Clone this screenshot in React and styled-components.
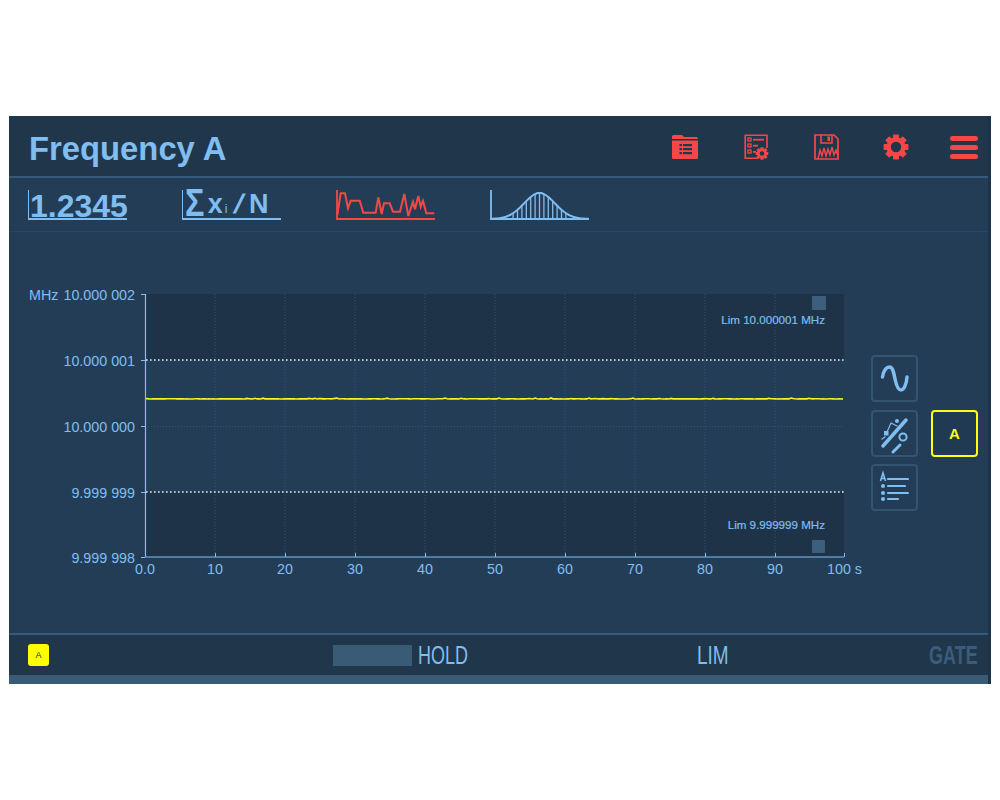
import React from 'react'
import styled, { createGlobalStyle } from 'styled-components'

const BLUE = '#80bdf0'
const RED = '#f44848'

const GlobalStyle = createGlobalStyle`
  html, body {
    margin: 0;
    background: #fff;
    font-family: "Liberation Sans", Arial, sans-serif;
  }
`

const Page = styled.div`
  width: 1000px;
  height: 800px;
  padding: 116px 9px 0;
  box-sizing: border-box;
`

const Panel = styled.div`
  display: flex;
  flex-direction: column;
  width: 982px;
  height: 568px;
  background: #243d57;
  border-right: 3px solid #1d3349;
  box-sizing: border-box;
`

const Header = styled.header`
  display: flex;
  align-items: center;
  justify-content: space-between;
  height: 62px;
  padding: 0 10px 0 20px;
  box-sizing: border-box;
  background: #20364b;
  border-bottom: 2px solid #37597a;
`

const Title = styled.h1`
  margin: 0;
  padding-top: 5px;
  font-size: 32.8px;
  font-weight: 700;
  color: ${BLUE};
`

const Actions = styled.div`
  display: flex;
  align-items: center;
  padding-top: 2px;
`

const ActionIcon = styled.svg`
  display: block;
  width: ${p => p.$w}px;
  height: 28px;
  margin-left: ${p => p.$gap}px;
`

const Tabs = styled.nav`
  display: flex;
  gap: 55px;
  height: 54px;
  padding: 10px 0 0 19px;
  box-sizing: border-box;
  border-bottom: 1px solid #294560;
`

const TextTab = styled.div`
  display: flex;
  align-items: flex-end;
  width: 99px;
  height: 30px;
  margin-top: 2px;
  box-sizing: border-box;
  border-left: 1.5px solid ${BLUE};
  border-bottom: 2px solid ${BLUE};
  color: ${BLUE};
  font-weight: 700;
  line-height: 1;
`

const Reading = styled.span`
  font-size: 32px;
  margin: 0 0 -4px 1px;
`

const MeanFormula = styled.span`
  display: flex;
  align-items: baseline;
  margin: 0 0 -1px 2px;
  font-size: 27px;
  sub {
    font-size: 12px;
    font-weight: 400;
    margin: 0 3px 0 2px;
    vertical-align: baseline;
  }
`

const Sigma = styled.span`
  display: inline-block;
  font-size: 38px;
  transform: translateY(3px) scaleX(0.85);
  transform-origin: left bottom;
`

const Slash = styled.span`
  display: inline-block;
  margin: 0 7px 0 4px;
  transform: skewX(-17deg);
`

const TabIcon = styled.svg`
  display: block;
  width: 99px;
  height: 32px;
`

const Body = styled.main`
  flex: 1;
  display: flex;
  align-items: flex-start;
`

const Chart = styled.svg`
  display: block;
  width: 855px;
  height: 330px;
  margin-top: 48px;
  font-family: "Liberation Sans", Arial, sans-serif;
`

const Side = styled.div`
  display: grid;
  grid-template-columns: 47px 47px;
  grid-auto-rows: 47px;
  column-gap: 13px;
  row-gap: 7.5px;
  margin: 123px 0 0 7px;
`

const SideButton = styled.button`
  grid-column: ${p => (p.$channel ? 2 : 1)};
  grid-row: ${p => p.$row};
  display: flex;
  align-items: center;
  justify-content: center;
  padding: 0;
  box-sizing: border-box;
  background: ${p => (p.$channel ? '#213a54' : 'transparent')};
  border: 2px solid ${p => (p.$channel ? '#ffff14' : '#34546f')};
  border-radius: 4px;
  color: #ffff14;
  font: 700 15px "Liberation Sans", Arial, sans-serif;
`

const SideIcon = styled.svg`
  display: block;
  width: 43px;
  height: 43px;
`

const Footer = styled.footer`
  display: flex;
  align-items: center;
  height: 42px;
  padding: 0 10px 0 19px;
  box-sizing: border-box;
  background: #20364b;
  border-top: 2px solid #37597a;
  color: ${BLUE};
`

const Badge = styled.div`
  display: flex;
  align-items: center;
  justify-content: center;
  width: 21px;
  height: 22px;
  background: #ffff00;
  border-radius: 3px;
  color: #1b2c55;
  font-size: 9px;
`

const HoldBar = styled.div`
  width: 79px;
  height: 21px;
  margin-left: 284px;
  background: #3a5b76;
`

// no condensed family is installed, so the lamp labels are squeezed
const Flag = styled.span`
  display: block;
  width: ${p => p.$w}px;
  margin-left: ${p => p.$left};
  font-size: 25px;
  font-weight: ${p => (p.$off ? 700 : 400)};
  color: ${p => (p.$off ? '#3b5d7c' : BLUE)};
  white-space: nowrap;
  transform: scaleX(${p => p.$squeeze});
  transform-origin: left center;
`

const BottomStrip = styled.div`
  height: 9px;
  background: #3a5b76;
`

function FolderIcon() {
  return (
    <ActionIcon $w={28} $gap={0} viewBox="0 0 28 28">
      <path fill={RED} d="M1 3.5 Q1 2 2.5 2 H11 L13 4 H25.5 Q27 4 27 5.5 V6 H1Z" />
      <path fill={RED} d="M1 7.5 H27 V24.5 Q27 26 25.5 26 H2.5 Q1 26 1 24.5Z" />
      <g fill="#20364b">
        <rect x="8.5" y="11" width="2.4" height="2.2" />
        <rect x="12" y="11" width="9" height="2.2" />
        <rect x="8.5" y="15" width="2.4" height="2.2" />
        <rect x="12" y="15" width="9" height="2.2" />
        <rect x="8.5" y="19" width="2.4" height="2.2" />
        <rect x="12" y="19" width="9" height="2.2" />
      </g>
    </ActionIcon>
  )
}

function GearShape({ cx, cy, r, hole, fill }) {
  const teeth = [0, 45, 90, 135, 180, 225, 270, 315]
  return (
    <g>
      <circle cx={cx} cy={cy} r={r * 0.78} fill={fill} />
      {teeth.map(a => (
        <rect
          key={a}
          x={cx - r * 0.24}
          y={cy - r}
          width={r * 0.48}
          height={r * 0.5}
          rx={r * 0.06}
          fill={fill}
          transform={`rotate(${a} ${cx} ${cy})`}
        />
      ))}
      <circle cx={cx} cy={cy} r={hole} fill="#20364b" />
    </g>
  )
}

function ChecklistIcon() {
  return (
    <ActionIcon $w={25} $gap={45} viewBox="0 0 25 28">
      <path fill="none" stroke={RED} strokeWidth="1.6" d="M14 25.2 H1.2 V2.2 H23 V15" />
      <g fill="none" stroke={RED} strokeWidth="1.3">
        <rect x="4" y="5" width="3" height="3" />
        <rect x="4" y="11" width="3" height="3" />
        <rect x="4" y="17" width="3" height="3" />
      </g>
      <rect x="9" y="5.8" width="11" height="1.8" fill={RED} />
      <rect x="9" y="11.8" width="5" height="1.8" fill={RED} />
      <rect x="9" y="18" width="3" height="1.8" fill={RED} />
      <GearShape cx={18} cy={20.5} r={6.3} hole={2.3} fill={RED} />
    </ActionIcon>
  )
}

function FloppyIcon() {
  return (
    <ActionIcon $w={25} $gap={45} viewBox="0 0 25 28">
      <path fill="none" stroke={RED} strokeWidth="1.7" d="M1 2 H20 L24 6 V26 H1Z" />
      <path fill="none" stroke={RED} strokeWidth="1.6" d="M7 2 V10 H18 V2" />
      <rect x="13.5" y="3.5" width="2.5" height="4.5" fill={RED} />
      <path
        fill="none"
        stroke={RED}
        strokeWidth="1.4"
        d="M4 26 L6 17 L8 23 L10 15 L12 23 L14 16 L16 22 L18 14 L20 22 L22 17 L24 23"
      />
    </ActionIcon>
  )
}

function SettingsIcon() {
  return (
    <ActionIcon $w={26} $gap={44} viewBox="0 0 26 28">
      <GearShape cx={13} cy={14} r={12.4} hole={5.2} fill={RED} />
    </ActionIcon>
  )
}

function HamburgerIcon() {
  return (
    <ActionIcon $w={28} $gap={41} viewBox="0 0 28 28">
      <rect y="3" width="28" height="5" rx="2.5" fill={RED} />
      <rect y="12" width="28" height="5" rx="2.5" fill={RED} />
      <rect y="21" width="28" height="5" rx="2.5" fill={RED} />
    </ActionIcon>
  )
}

function TraceTab() {
  return (
    <TabIcon viewBox="0 0 99 32">
      <path fill="none" stroke={RED} strokeWidth="1.8" d="M1 2 V31 H99" />
      <path
        fill="none"
        stroke={RED}
        strokeWidth="2"
        d="M1.3 27 L4.7 5.3 H9 L12 20.3 L14.7 12.7 H23.7 L27.3 24.7 H39.7 L42.3 9.3 L45.7 26 L48 15.3 H53.7 L57 23.7 H64 L68.3 6 L72.3 28 L77 13.7 L79 21.3 L82.3 8 L84.7 18.7 L87 12.7 L90.3 25.3 H98.3"
      />
    </TabIcon>
  )
}

function bellPoint(x) {
  return 31 - 26 * Math.exp(-Math.pow((x - 49.5) / 21.6, 2))
}

function HistogramTab() {
  const xs = []
  for (let x = 0; x <= 99; x += 1) xs.push(x)
  const curve = xs.map(x => `${x === 0 ? 'M' : 'L'}${x} ${bellPoint(x).toFixed(1)}`).join(' ')
  const bars = [-6, -5, -4, -3, -2, -1, 0, 1, 2, 3, 4, 5, 6].map(k => 49.5 + k * 4.4)
  return (
    <TabIcon viewBox="0 0 99 32">
      <path fill="none" stroke={BLUE} strokeWidth="1.8" d="M1 2 V31 H99" />
      {bars.map(x => (
        <line key={x} x1={x} x2={x} y1={31} y2={bellPoint(x)} stroke={BLUE} strokeWidth="1.3" />
      ))}
      <path fill="none" stroke={BLUE} strokeWidth="2" d={curve} />
    </TabIcon>
  )
}

// repeatable jitter for the measured trace
function tracePath() {
  let d = 'M146 399'
  for (let x = 147; x <= 844; x += 2) {
    const n = Math.sin(x * 12.9898) * 43758.5453
    const j = n - Math.floor(n)
    d += ` L${x} ${(399 - (j > 0.88 ? (j - 0.88) * 9 : j * 0.3)).toFixed(2)}`
  }
  return d
}

const yLabels = [
  ['10.000 002', 294],
  ['10.000 001', 360],
  ['10.000 000', 426],
  ['9.999 999', 492],
  ['9.999 998', 557],
]

const xLabels = ['0.0', '10', '20', '30', '40', '50', '60', '70', '80', '90']
const gridX = [215, 285, 355, 425, 495, 565, 635, 705, 775]

function FrequencyChart() {
  return (
    <Chart viewBox="9 280 855 330">
      <rect x="145" y="294" width="699" height="66" fill="#1e3347" />
      <rect x="145" y="492" width="699" height="65" fill="#1e3347" />
      {gridX.map(x => (
        <line key={x} x1={x} x2={x} y1="294" y2="557" stroke="#35556f" strokeWidth="1" strokeDasharray="1 2" />
      ))}
      <line x1="145" x2="844" y1="426.5" y2="426.5" stroke="#35556f" strokeDasharray="1 2" />
      <line x1="146" x2="844" y1="360" y2="360" stroke="#e8f2f6" strokeWidth="1.3" strokeDasharray="1.6 2.4" />
      <line x1="146" x2="844" y1="492" y2="492" stroke="#e8f2f6" strokeWidth="1.3" strokeDasharray="1.6 2.4" />
      <path d={tracePath()} fill="none" stroke="#f6f620" strokeWidth="1.6" />

      <path d="M145.5 294 V557 H844" fill="none" stroke={BLUE} strokeWidth="1.2" />
      {yLabels.map(([label, y]) => (
        <g key={label}>
          <line x1="141" x2="145" y1={y + 0.5} y2={y + 0.5} stroke={BLUE} />
          <text x="135" y={y + 6} textAnchor="end" fontSize="14.3" fill={BLUE}>{label}</text>
        </g>
      ))}
      <text x="29" y="300" fontSize="14.3" fill={BLUE}>MHz</text>

      {xLabels.map((label, i) => (
        <text key={label} x={145 + i * 70} y="574" textAnchor="middle" fontSize="14.3" fill={BLUE}>{label}</text>
      ))}
      {[...gridX, 844].map(x => (
        <line key={x} x1={x + 0.5} x2={x + 0.5} y1="553" y2="557" stroke={BLUE} />
      ))}
      <text x="827" y="574" fontSize="14.3" fill={BLUE}>100 s</text>

      <rect x="812" y="296" width="14" height="14" rx="1" fill="#3d5f7d" />
      <rect x="812" y="540" width="13" height="13" rx="1" fill="#3d5f7d" />
      <text x="825" y="324" textAnchor="end" fontSize="11.6" fill={BLUE} stroke={BLUE} strokeWidth="0.2">Lim 10.000001 MHz</text>
      <text x="825" y="529" textAnchor="end" fontSize="11.6" fill={BLUE} stroke={BLUE} strokeWidth="0.2">Lim 9.999999 MHz</text>
    </Chart>
  )
}

function SineIcon() {
  return (
    <SideIcon viewBox="0 0 43 43">
      <path
        fill="none"
        stroke={BLUE}
        strokeWidth="3.5"
        strokeLinecap="round"
        d="M9.5 20 C11 12 14 10 16.5 10 C20 10 21 17 22 22 C23.5 29 25 33 28 33 C31 33 33.5 27 34 20"
      />
    </SideIcon>
  )
}

function MarkerIcon() {
  return (
    <SideIcon viewBox="0 0 43 43">
      <g fill="none" stroke={BLUE} strokeLinecap="round">
        <path strokeWidth="3.5" d="M10 34 L33 8" />
        <path strokeWidth="1.2" d="M14 20 L18 11 L24 14" />
        <path strokeWidth="1.4" d="M9 27 L12 25" />
        <path strokeWidth="3" d="M20 40 L27 33" />
        <circle cx="30" cy="25" r="3.6" strokeWidth="2" />
      </g>
      <rect x="11" y="19" width="4.5" height="4.5" fill={BLUE} />
      <circle cx="24" cy="9" r="2" fill={BLUE} />
    </SideIcon>
  )
}

function ListIcon() {
  return (
    <SideIcon viewBox="0 0 43 43">
      <path fill="none" stroke={BLUE} strokeWidth="1.6" d="M7.5 15 L10 7 L12.5 15 M8.5 12.5 H11.5" />
      <g fill={BLUE}>
        <circle cx="10" cy="20" r="2" />
        <circle cx="10" cy="27" r="2" />
        <circle cx="10" cy="33" r="2" />
      </g>
      <g stroke={BLUE} strokeWidth="2.2" strokeLinecap="round">
        <line x1="15" x2="35" y1="13" y2="13" />
        <line x1="15" x2="32" y1="20" y2="20" />
        <line x1="15" x2="35" y1="27" y2="27" />
        <line x1="15" x2="25" y1="33" y2="33" />
      </g>
    </SideIcon>
  )
}

export default function App() {
  return (
    <Page>
      <GlobalStyle />
      <Panel>
        <Header>
          <Title>Frequency A</Title>
          <Actions>
            <FolderIcon />
            <ChecklistIcon />
            <FloppyIcon />
            <SettingsIcon />
            <HamburgerIcon />
          </Actions>
        </Header>
        <Tabs>
          <TextTab><Reading>1.2345</Reading></TextTab>
          <TextTab>
            <MeanFormula><Sigma>Σ</Sigma>x<sub>i</sub><Slash>/</Slash>N</MeanFormula>
          </TextTab>
          <TraceTab />
          <HistogramTab />
        </Tabs>
        <Body>
          <FrequencyChart />
          <Side>
            <SideButton $row={1}><SineIcon /></SideButton>
            <SideButton $row={2}><MarkerIcon /></SideButton>
            <SideButton $row={2} $channel>A</SideButton>
            <SideButton $row={3}><ListIcon /></SideButton>
          </Side>
        </Body>
        <Footer>
          <Badge>A</Badge>
          <HoldBar />
          <Flag $w={50} $left="6px" $squeeze={0.72}>HOLD</Flag>
          <Flag $w={33} $left="229px" $squeeze={0.76}>LIM</Flag>
          <Flag $off $w={49} $left="auto" $squeeze={0.72}>GATE</Flag>
        </Footer>
        <BottomStrip />
      </Panel>
    </Page>
  )
}
